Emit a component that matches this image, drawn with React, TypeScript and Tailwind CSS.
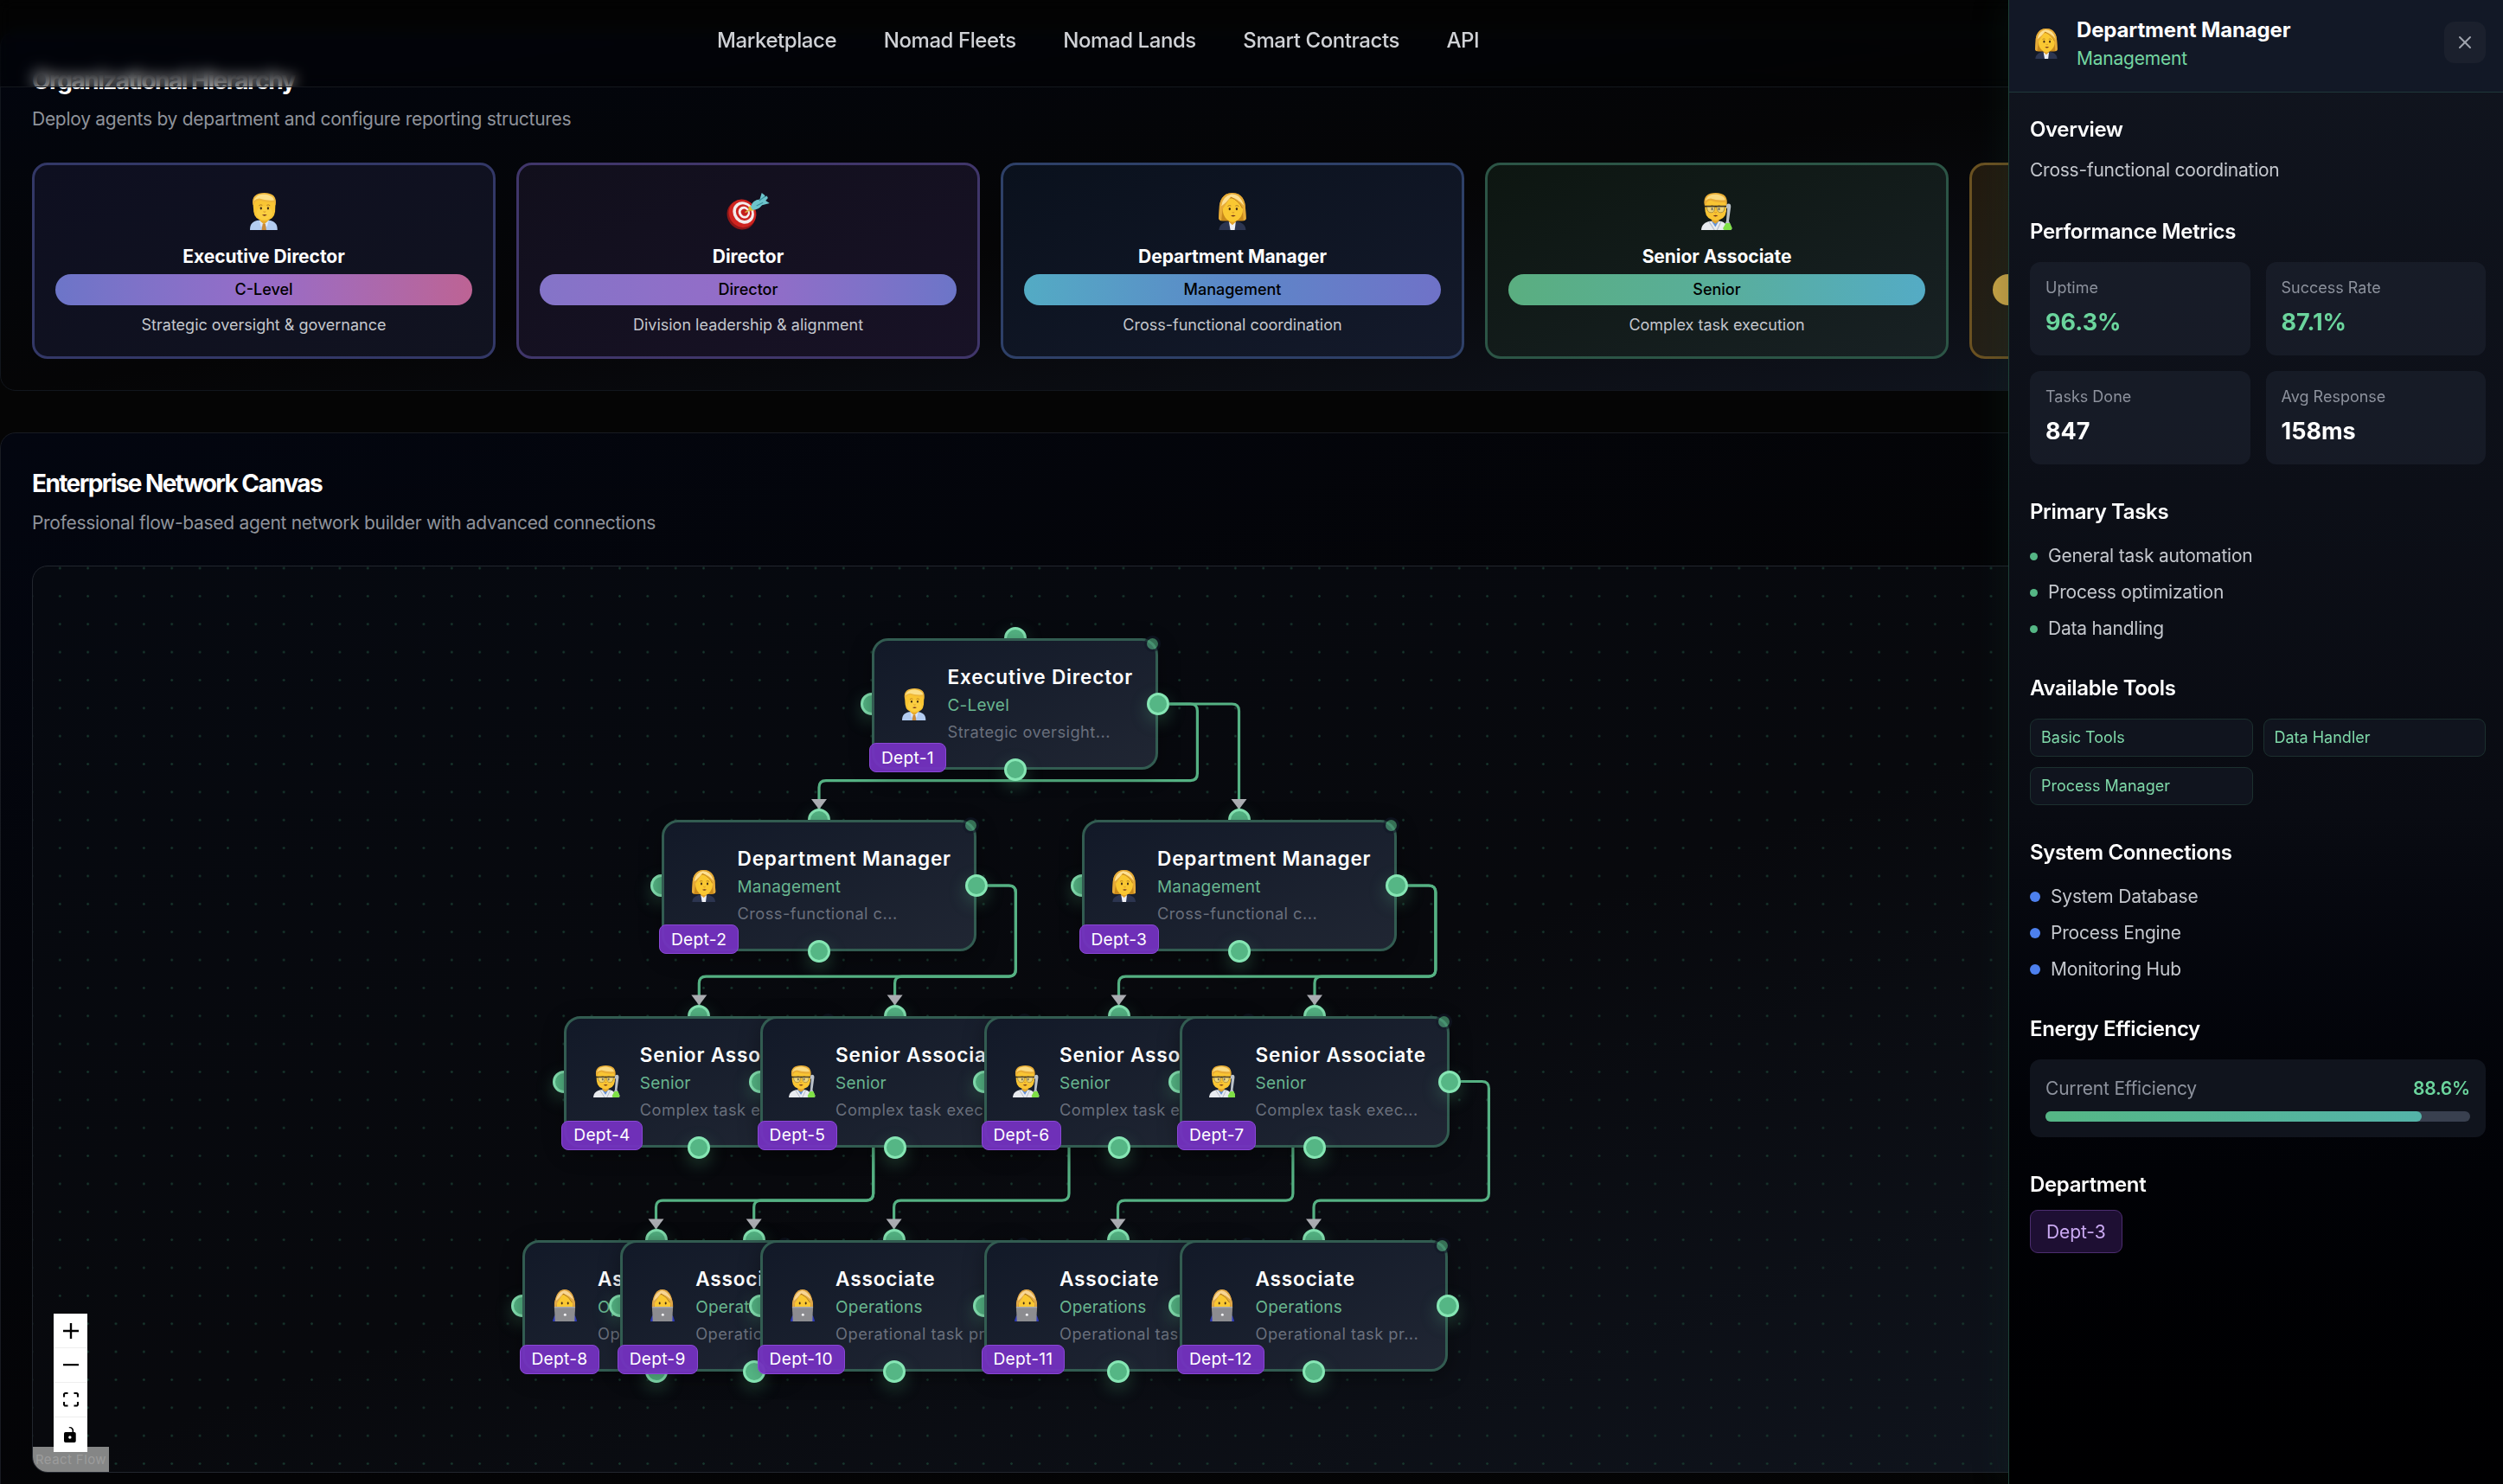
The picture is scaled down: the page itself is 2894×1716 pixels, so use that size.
import React from "react";
import { X } from "lucide-react";

type Role = "exec" | "director" | "manager" | "senior" | "associate";

function Face({ y = 0 }: { y?: number }) {
  return (
    <g transform={`translate(0 ${y})`}>
      <ellipse cx="33" cy="46" rx="3" ry="4.2" fill="#3f2a14" />
      <ellipse cx="54" cy="46" rx="3" ry="4.2" fill="#3f2a14" />
      <path d="M27 38q5-4 10-1M50 37q5-3 10 1" stroke="#a9741d" strokeWidth="2.4" fill="none" />
      <path d="M40 56q4 3 7 0" stroke="#d3902a" strokeWidth="2.4" fill="none" />
      <path d="M36 66q7 6 15 0q-7-3-15 0z" fill="#6e2f1a" />
    </g>
  );
}

function Emoji({ role, className }: { role: Role; className: string }) {
  if (role === "director") {
    return (
      <svg viewBox="0 0 134 114" className={className}>
        <ellipse cx="45" cy="68" rx="42" ry="46" transform="rotate(-38 45 68)" fill="#8f1717" />
        <ellipse cx="49" cy="63" rx="41" ry="44" transform="rotate(-38 49 63)" fill="#cf2420" />
        <ellipse cx="52" cy="61" rx="31" ry="35" transform="rotate(-38 52 61)" fill="#f4ecec" />
        <ellipse cx="53" cy="60" rx="23" ry="26" transform="rotate(-38 53 60)" fill="#cc2320" />
        <ellipse cx="54" cy="60" rx="17" ry="19" transform="rotate(-38 54 60)" fill="#f6eeee" />
        <ellipse cx="55" cy="60" rx="10" ry="11" transform="rotate(-38 55 60)" fill="#c41f1c" />
        <path d="M57 60L80 47" stroke="#d9b53d" strokeWidth="4" />
        <path d="M72 40l14 14-13 1-7-8z" fill="#e0b92f" />
        <path d="M74 42Q80 22 102 20L108 0l10 8-3 6 9-5 3 7-7 8 12 8-23 6Q96 54 79 52z" fill="#6cc4cc" />
        <path d="M100 24l20-14M92 40l20-10" stroke="#3b8f9c" strokeWidth="3" />
      </svg>
    );
  }
  if (role === "exec") {
    return (
      <svg viewBox="0 0 82 111" className={className}>
        <path d="M0 111C0 92 8 86 24 82H58C74 86 82 92 82 111z" fill="#b3ccf0" />
        <path d="M30 70H54V86L42 96 30 86z" fill="#e6a92c" />
        <path d="M28 82l14 12-9 8zM56 82L42 94l9 8z" fill="#dbe8fb" />
        <path d="M38 92h8l3 19H35z" fill="#c98a3a" />
        <path d="M9 30Q8 2 42 2Q77 2 76 32L75 56Q72 82 43 84Q14 82 11 56z" fill="#f9c533" />
        <ellipse cx="43" cy="60" rx="24" ry="20" fill="#fcd34a" opacity=".6" />
        <path d="M9 36C4 10 20 0 43 0C68 0 82 12 76 38L71 28Q48 30 28 22Q16 24 14 32z" fill="#eeb73b" />
        <path d="M12 24C16 6 34 3 50 5C66 8 72 16 72 22Q46 24 28 17Q18 18 12 24z" fill="#fbe08a" />
        <Face />
      </svg>
    );
  }
  if (role === "manager") {
    return (
      <svg viewBox="0 0 82 111" className={className}>
        <path d="M41 0C70 0 80 24 80 46L82 76Q80 84 70 84H12Q2 84 0 76L2 46C2 24 12 0 41 0z" fill="#c98a1c" />
        <path d="M1 111C2 96 12 90 26 86H56C72 90 80 96 81 111z" fill="#2c3550" />
        <path d="M31 88H51L48 111H35z" fill="#eef0f6" />
        <path d="M30 72H52V86L41 96 30 86z" fill="#e3a22b" />
        <path d="M12 42Q12 18 40 16Q70 18 72 44Q74 62 64 74Q54 87 42 87Q30 87 20 74Q11 62 12 42z" fill="#fac832" />
        <path d="M36 12Q62 22 72 48L74 82Q82 82 82 76L80 46C80 24 70 0 41 0C12 0 2 24 2 46L0 76Q2 84 8 82L12 48Q22 34 36 12z" fill="#e6ab38" />
        <path d="M36 12Q24 28 8 40Q12 10 38 4Q66 4 75 38Q60 18 36 12z" fill="#fde093" />
        <path d="M36 13Q61 24 71 46" stroke="#b87a16" strokeWidth="2.4" fill="none" />
        <Face y={2} />
      </svg>
    );
  }
  if (role === "senior") {
    return (
      <svg viewBox="0 0 94 113" className={className}>
        <path d="M0 113C1 96 12 89 26 86H58C72 89 80 98 80 113z" fill="#e8ebef" />
        <path d="M30 84H54L43 104z" fill="#5f8fd8" />
        <path d="M24 88L40 113M60 88L48 113" stroke="#b6bcc6" strokeWidth="3" />
        <path d="M32 72H54V86L43 94 32 86z" fill="#e2a42b" />
        <path d="M10 30Q9 2 43 2Q78 2 77 32L76 56Q73 82 44 84Q15 82 12 56z" fill="#f9c533" />
        <path d="M10 38C5 10 20 0 44 0C69 0 83 12 77 40L72 28Q48 31 28 23Q16 25 15 34z" fill="#e9ad35" />
        <path d="M13 24C17 6 35 3 51 5C67 8 73 16 73 22Q47 24 29 17Q19 18 13 24z" fill="#fada80" />
        <Face y={3} />
        <path d="M9 41H78" stroke="#2c261c" strokeWidth="4.5" />
        <path d="M17 42H41Q42 60 30 60Q17 60 17 42zM47 42H71Q71 60 59 60Q47 60 47 42z" fill="#dff3f2" fillOpacity=".35" stroke="#7a6a3a" strokeWidth="1.6" />
        <path d="M78 34Q90 30 90 42L84 86 93 106Q94 113 88 113H70Q65 112 67 106L76 86 79 48Q73 46 78 34z" fill="#d8dfe6" fillOpacity=".85" />
        <path d="M75 92H87L93 106Q94 113 88 113H70Q65 112 67 106z" fill="#7fe046" />
      </svg>
    );
  }
  return (
    <svg viewBox="0 0 84 111" className={className}>
      <path d="M0 111Q2 92 14 84H70Q82 92 84 111z" fill="#2b37b8" />
      <path d="M42 0C66 0 74 26 78 48Q80 64 76 78H8Q4 64 6 48C10 26 18 0 42 0z" fill="#b97c26" />
      <path d="M14 44Q16 20 40 18Q66 20 70 44Q72 58 66 74H20Q12 60 14 44z" fill="#fac832" />
      <path d="M36 14Q60 24 69 46L72 70L77 62L78 48C74 26 66 0 42 0C18 0 10 26 6 48L7 62L13 66L15 48Q26 32 36 14z" fill="#e0a848" />
      <path d="M36 14Q24 30 11 40Q16 10 40 4Q62 6 72 36Q56 20 36 14z" fill="#f8d694" />
      <path d="M36 15Q58 26 68 46" stroke="#a06a1a" strokeWidth="2.4" fill="none" />
      <ellipse cx="32" cy="48" rx="3" ry="4.2" fill="#3f2a14" />
      <ellipse cx="53" cy="48" rx="3" ry="4.2" fill="#3f2a14" />
      <path d="M6 60H78L76 111H8z" fill="#8c8c90" />
      <path d="M6 60H78V64H6z" fill="#a9a9ad" />
      <circle cx="43" cy="88" r="4.5" fill="#f4f4f6" />
    </svg>
  );
}

const navItems = ["Marketplace", "Nomad Fleets", "Nomad Lands", "Smart Contracts", "API"];

const roleCards: { role: Role; name: string; level: string; desc: string; card: string; pill: string }[] = [
  {
    role: "exec", name: "Executive Director", level: "C-Level", desc: "Strategic oversight & governance",
    card: "border-[#333867] from-[#0e0f20] to-[#111320]",
    pill: "from-[#6c75c8] via-[#976cc8] to-[#bd6394]",
  },
  {
    role: "director", name: "Director", level: "Director", desc: "Division leadership & alignment",
    card: "border-[#40366a] from-[#110f1c] to-[#181226]",
    pill: "from-[#8474c8] via-[#956cc8] to-[#6c75c8]",
  },
  {
    role: "manager", name: "Department Manager", level: "Management", desc: "Cross-functional coordination",
    card: "border-[#2e4068] from-[#0a111d] to-[#141a2b]",
    pill: "from-[#53abc4] via-[#5b87c8] to-[#6f72c8]",
  },
  {
    role: "senior", name: "Senior Associate", level: "Senior", desc: "Complex task execution",
    card: "border-[#2c5546] from-[#0d1611] to-[#182124]",
    pill: "from-[#5aae80] via-[#59ae9a] to-[#54abc5]",
  },
  {
    role: "associate", name: "Associate", level: "Operations", desc: "Operational task processing",
    card: "border-[#6b5222] from-[#221a0f] to-[#262620]",
    pill: "from-[#c9a446] via-[#c98c46] to-[#c97a46]",
  },
];

const roleInfo: Record<Role, { name: string; level: string; desc: string }> = {
  exec: { name: "Executive Director", level: "C-Level", desc: "Strategic oversight..." },
  director: { name: "Director", level: "Director", desc: "Division leadership..." },
  manager: { name: "Department Manager", level: "Management", desc: "Cross-functional c..." },
  senior: { name: "Senior Associate", level: "Senior", desc: "Complex task exec..." },
  associate: { name: "Associate", level: "Operations", desc: "Operational task pr..." },
};

/* Node and edge coordinates share one origin: the flow canvas' inner corner sits at (OX, OY). */
const OX = 38;
const OY = 655;

const nodes: { id: number; role: Role; x: number; y: number; w: number }[] = [
  { id: 1, role: "exec", x: 1008, y: 738, w: 331 },
  { id: 2, role: "manager", x: 765, y: 948, w: 364 },
  { id: 3, role: "manager", x: 1250.5, y: 948, w: 364 },
  { id: 4, role: "senior", x: 652.3, y: 1174.5, w: 312 },
  { id: 5, role: "senior", x: 878.6, y: 1174.5, w: 312 },
  { id: 6, role: "senior", x: 1137.5, y: 1174.5, w: 312 },
  { id: 7, role: "senior", x: 1364, y: 1174.5, w: 312 },
  { id: 8, role: "associate", x: 603.5, y: 1433.5, w: 310 },
  { id: 9, role: "associate", x: 716.7, y: 1433.5, w: 310 },
  { id: 10, role: "associate", x: 878.6, y: 1433.5, w: 310 },
  { id: 11, role: "associate", x: 1137.5, y: 1433.5, w: 310 },
  { id: 12, role: "associate", x: 1364, y: 1433.5, w: 310 },
];

const links: [number, number][] = [
  [1, 2], [1, 3], [2, 4], [2, 5], [3, 6], [3, 7], [4, 8], [4, 9], [5, 10], [6, 11], [7, 12],
];

function edgePath(from: number, to: number) {
  const a = nodes[from - 1];
  const b = nodes[to - 1];
  const sx = a.x + a.w + 13;
  const sy = a.y + 76;
  const tx = b.x + b.w / 2;
  const ty = b.y - 13;
  const r = 8;
  if (tx > sx + 50) {
    return `M${sx} ${sy}H${tx - r}Q${tx} ${sy} ${tx} ${sy + r}V${ty}`;
  }
  const mx = sx + 32.4;
  const my = ty - 32.4;
  return `M${sx} ${sy}H${mx - r}Q${mx} ${sy} ${mx} ${sy + r}V${my - r}Q${mx} ${my} ${mx - r} ${my}H${tx + r}Q${tx} ${my} ${tx} ${my + r}V${ty}`;
}

const handle =
  "absolute h-[26px] w-[26px] rounded-full border-[3px] border-[#86e6b4] bg-[#55b685] shadow-[0_7px_20px_rgba(85,182,133,0.3)]";

function FlowNode({ id, role, x, y, w }: (typeof nodes)[number]) {
  const info = roleInfo[role];
  return (
    <div className="absolute h-[152px]" style={{ left: x - OX, top: y - OY, width: w }}>
      <span className={`${handle} -top-[13px] left-1/2 -translate-x-1/2`} />
      <span className={`${handle} -left-[13px] top-[63px]`} />
      <div className="relative flex h-full items-center rounded-[19px] border-[3px] border-[#325c51] bg-linear-to-br from-[#121928] to-[#202633] pl-[29px] shadow-[0_6px_24px_rgba(0,0,0,0.35)]">
        <div className="flex w-[34px] shrink-0 justify-center">
          <Emoji role={role} className="h-[37px] w-auto" />
        </div>
        <div className="ml-[21.5px] whitespace-nowrap">
          <div className="text-[22.6px] leading-[30px] font-semibold tracking-[0.82px] text-white">{info.name}</div>
          <div className="text-[19px] leading-[35px] tracking-[0.2px] text-[#68b58f]">{info.level}</div>
          <div className="text-[18.3px] leading-[27px] tracking-[0.45px] text-[#696f7c]">{info.desc}</div>
        </div>
        <span className="absolute -top-[3px] -right-[3px] h-[13px] w-[13px] rounded-full bg-[#55b685]/60 shadow-[0_0_0_3px_rgba(18,25,40,0.6)]" />
      </div>
      <span className={`${handle} -right-[13px] top-[63px]`} />
      <span className={`${handle} -bottom-[13px] left-1/2 -translate-x-1/2`} />
      <span className="absolute -bottom-[3px] -left-[3px] flex h-[34px] items-center rounded-[8px] border border-[#8a48d6] bg-[#7431c0]/95 px-[13px] text-[19.2px] tracking-[0.25px] text-white">
        Dept-{id}
      </span>
    </div>
  );
}

function FlowCanvas() {
  return (
    <div className="relative mt-[34px] h-[1049px] overflow-hidden rounded-[18px] border border-[#22262e] bg-linear-to-br from-[#060910] via-[#08090d] to-[#111620]">
      <div className="absolute inset-0 bg-[radial-gradient(circle,#17352c_1px,transparent_1.6px)] bg-[length:32.36px_32.36px] bg-[position:15.1px_18.2px]" />
      <svg className="absolute inset-0 h-full w-full" viewBox="38 655 2820 1047" preserveAspectRatio="xMinYMin slice">
        {links.map(([a, b]) => {
          const t = nodes[b - 1];
          const tx = t.x + t.w / 2;
          const ty = t.y - 12;
          return (
            <g key={`${a}-${b}`}>
              <path d={edgePath(a, b)} fill="none" stroke="#55b183" strokeWidth="3.2" />
              <path d={`M${tx - 9} ${ty - 12}H${tx + 9}L${tx} ${ty}z`} fill="#adadb3" />
            </g>
          );
        })}
      </svg>
      {nodes.map((n) => (
        <FlowNode key={n.id} {...n} />
      ))}
      <div className="absolute bottom-0 left-0 h-[29px] w-[88px] bg-[#858686] text-center text-[15px] leading-[29px] tracking-[0.4px] text-[#9c9c9c]">
        React Flow
      </div>
      <div className="absolute bottom-[23px] left-[24px] flex w-[39px] flex-col divide-y divide-[#eeeeee] bg-white">
        <div className="flex h-[40px] items-center justify-center">
          <svg viewBox="0 0 32 32" className="w-[18px]"><path d="M32 18.133H18.133V32h-4.266V18.133H0v-4.266h13.867V0h4.266v13.867H32z" /></svg>
        </div>
        <div className="flex h-[40px] items-center justify-center">
          <svg viewBox="0 0 32 5" className="w-[18px]"><path d="M0 0h32v4.2H0z" /></svg>
        </div>
        <div className="flex h-[40px] items-center justify-center">
          <svg viewBox="0 0 32 30" className="w-[18px]"><path d="M3.692 4.63c0-.53.4-.938.939-.938h5.215V0H4.708C2.13 0 0 2.054 0 4.63v5.216h3.692V4.631zM27.354 0h-5.2v3.692h5.17c.53 0 .984.4.984.939v5.215H32V4.631A4.624 4.624 0 0027.354 0zm.954 24.83c0 .532-.4.94-.939.94h-5.215v3.768h5.215c2.577 0 4.631-2.13 4.631-4.707v-5.139h-3.692v5.139zm-23.677.94c-.531 0-.939-.4-.939-.94v-5.138H0v5.139c0 2.577 2.13 4.707 4.708 4.707h5.138V25.77H4.631z" /></svg>
        </div>
        <div className="flex h-[40px] items-center justify-center">
          <svg viewBox="0 0 25 32" className="h-[18px]"><path d="M21.333 10.667H19.81V7.619C19.81 3.429 16.38 0 12.19 0c-4.114 1.828-1.37 2.133.305 2.438 1.676.305 4.42 2.59 4.42 5.181v3.048H3.047A3.056 3.056 0 000 13.714v15.238A3.056 3.056 0 003.048 32h18.285a3.056 3.056 0 003.048-3.048V13.714a3.056 3.056 0 00-3.048-3.047zM12.19 24.533a3.056 3.056 0 01-3.047-3.047 3.056 3.056 0 013.047-3.048 3.056 3.056 0 013.048 3.048 3.056 3.056 0 01-3.048 3.047z" /></svg>
        </div>
      </div>
    </div>
  );
}

function PanelSection({ title, children }: { title: string; children: React.ReactNode }) {
  return (
    <section>
      <h3 className="pt-[2px] text-[24px] leading-[34px] font-semibold tracking-[-0.36px] text-white">{title}</h3>
      {children}
    </section>
  );
}

const metrics = [
  { label: "Uptime", value: "96.3%", color: "text-[#6bd59d]" },
  { label: "Success Rate", value: "87.1%", color: "text-[#6bd59d]" },
  { label: "Tasks Done", value: "847", color: "text-white" },
  { label: "Avg Response", value: "158ms", color: "text-white" },
];

const listItem = "flex items-center gap-3 pt-[2px] text-[21px] leading-[28px] tracking-[-0.2px] text-[#c4c7cd]";

function DetailsPanel() {
  return (
    <aside className="relative z-20 w-[576px] shrink-0 border-l border-[#1f4238] bg-linear-to-b from-[#11151f] via-[#090b12] via-55% to-[#000001] shadow-[-6px_0_36px_rgba(20,60,45,0.2)]">
      <header className="flex h-[107px] items-start border-b border-[#20383a] bg-[#121826] px-6 pt-[17px]">
        <div className="flex h-[66px] w-[38px] items-center justify-center">
          <Emoji role="manager" className="h-[35px] w-auto" />
        </div>
        <div className="ml-[16px] flex-1">
          <h2 className="text-[24px] leading-[36px] font-bold tracking-[-0.15px] text-white">Department Manager</h2>
          <p className="text-[21px] leading-[30px] tracking-[-0.22px] text-[#74d6a1]">Management</p>
        </div>
        <button className="mt-[8px] flex h-12 w-12 items-center justify-center rounded-xl bg-[#1b202d] text-[#a0a4ae]">
          <X size={24} strokeWidth={2} />
        </button>
      </header>
      <div className="flex flex-col gap-9 p-6">
        <PanelSection title="Overview">
          <p className="mt-3 pt-[2px] text-[21px] leading-[32px] tracking-[-0.24px] text-[#c4c7cd]">Cross-functional coordination</p>
        </PanelSection>
        <PanelSection title="Performance Metrics">
          <div className="mt-[18px] grid grid-cols-2 gap-[18px]">
            {metrics.map((m) => (
              <div key={m.label} className="h-[108px] rounded-xl bg-[#1f2634]/50 p-[18px]">
                <div className="text-[18px] leading-6 text-[#8d929d]">{m.label}</div>
                <div className={`mt-[7px] text-[27px] leading-[42px] font-bold ${m.color}`}>{m.value}</div>
              </div>
            ))}
          </div>
        </PanelSection>
        <PanelSection title="Primary Tasks">
          <ul className="mt-[18px] flex flex-col gap-3">
            {["General task automation", "Process optimization", "Data handling"].map((t) => (
              <li key={t} className={listItem}>
                <span className="h-[9px] w-[9px] rounded-full bg-[#55b685]" />
                {t}
              </li>
            ))}
          </ul>
        </PanelSection>
        <PanelSection title="Available Tools">
          <div className="mt-[18px] grid grid-cols-2 gap-3">
            {["Basic Tools", "Data Handler", "Process Manager"].map((t) => (
              <div key={t} className="flex h-[44px] items-center rounded-[9px] border border-[#1c302f] bg-[#10141e] px-3 pb-[1px] text-[18px] text-[#7fd9a9]">
                {t}
              </div>
            ))}
          </div>
        </PanelSection>
        <PanelSection title="System Connections">
          <ul className="mt-[18px] flex flex-col gap-3">
            {["System Database", "Process Engine", "Monitoring Hub"].map((t) => (
              <li key={t} className={listItem}>
                <span className="h-3 w-3 rounded-full bg-[#4d80ee]" />
                {t}
              </li>
            ))}
          </ul>
        </PanelSection>
        <PanelSection title="Energy Efficiency">
          <div className="mt-[18px] rounded-xl bg-[#10141d] p-[18px]">
            <div className="flex justify-between pt-[2px] text-[21px] leading-[28px] tracking-[-0.2px]">
              <span className="text-[#8d929d]">Current Efficiency</span>
              <span className="font-semibold text-[#6bd59d]">88.6%</span>
            </div>
            <div className="mt-3 h-3 rounded-full bg-[#39404f]">
              <div className="h-3 w-[88.6%] rounded-full bg-linear-to-r from-[#55b685] to-[#54b3a8]" />
            </div>
          </div>
        </PanelSection>
        <PanelSection title="Department">
          <span className="mt-3 inline-flex rounded-[9px] border border-[#4c2d70] bg-[#1e0f33] px-[18px] pt-[10px] pb-[8px] text-[21px] leading-[30px] tracking-[-0.1px] text-[#caa9f2]">
            Dept-3
          </span>
        </PanelSection>
      </div>
    </aside>
  );
}

export default function App() {
  return (
    <div className="relative flex h-[1716px] w-[2894px] overflow-hidden bg-[#050505] font-[Inter,sans-serif]">
      <nav className="absolute inset-x-0 top-0 z-10 flex h-[101px] items-center gap-[54.5px] border-b border-[#14171d] bg-black/30 pb-[6px] pl-[829px] text-[24px] font-medium tracking-[-0.42px] text-[#d0d2d6] backdrop-blur-[8px]">
        {navItems.map((n) => (
          <a key={n}>{n}</a>
        ))}
      </nav>
      <main className="w-[2322px] shrink-0 overflow-hidden">
        <div className="flex w-[2894px] flex-col gap-[48px] pt-[36px]">
          <section className="h-[416px] rounded-[18px] border border-[#12161d] bg-linear-to-br from-[#02050f] via-[#050506] to-[#131824] p-[36px]">
            <h2 className="text-[28px] leading-[40px] font-bold tracking-[-1.5px] text-white">Organizational Hierarchy</h2>
            <p className="mt-[10px] text-[21px] leading-[30px] tracking-[-0.27px] text-[#8f939b]">
              Deploy agents by department and configure reporting structures
            </p>
            <div className="mt-[35px] grid grid-cols-[repeat(5,536px)] gap-6">
              {roleCards.map((c) => (
                <div key={c.name} className={`flex h-[227px] flex-col items-center rounded-[18px] border-[3px] bg-linear-to-br px-6 pt-[32px] ${c.card}`}>
                  <Emoji role={c.role} className="h-[43px] w-auto" />
                  <div className="mt-[16px] text-[21px] leading-[30px] font-bold tracking-[-0.05px] text-white">{c.name}</div>
                  <div className={`mt-[5px] h-[36px] w-full rounded-full bg-linear-to-r text-center text-[18px] leading-[36px] font-medium text-black ${c.pill}`}>
                    {c.level}
                  </div>
                  <div className="mt-[9px] text-[18px] leading-[27px] text-[#c4c7cd]">{c.desc}</div>
                </div>
              ))}
            </div>
          </section>
          <section className="h-[1300px] rounded-[18px] border border-[#181b22] bg-linear-to-br from-[#030610] via-[#040406] to-[#050505] p-[36px]">
            <h2 className="pt-[2px] text-[28px] leading-[41px] font-bold tracking-[-1.6px] text-white">Enterprise Network Canvas</h2>
            <p className="mt-[10px] text-[21px] leading-[30px] tracking-[-0.31px] text-[#8f939b]">
              Professional flow-based agent network builder with advanced connections
            </p>
            <FlowCanvas />
          </section>
        </div>
      </main>
      <DetailsPanel />
    </div>
  );
}
